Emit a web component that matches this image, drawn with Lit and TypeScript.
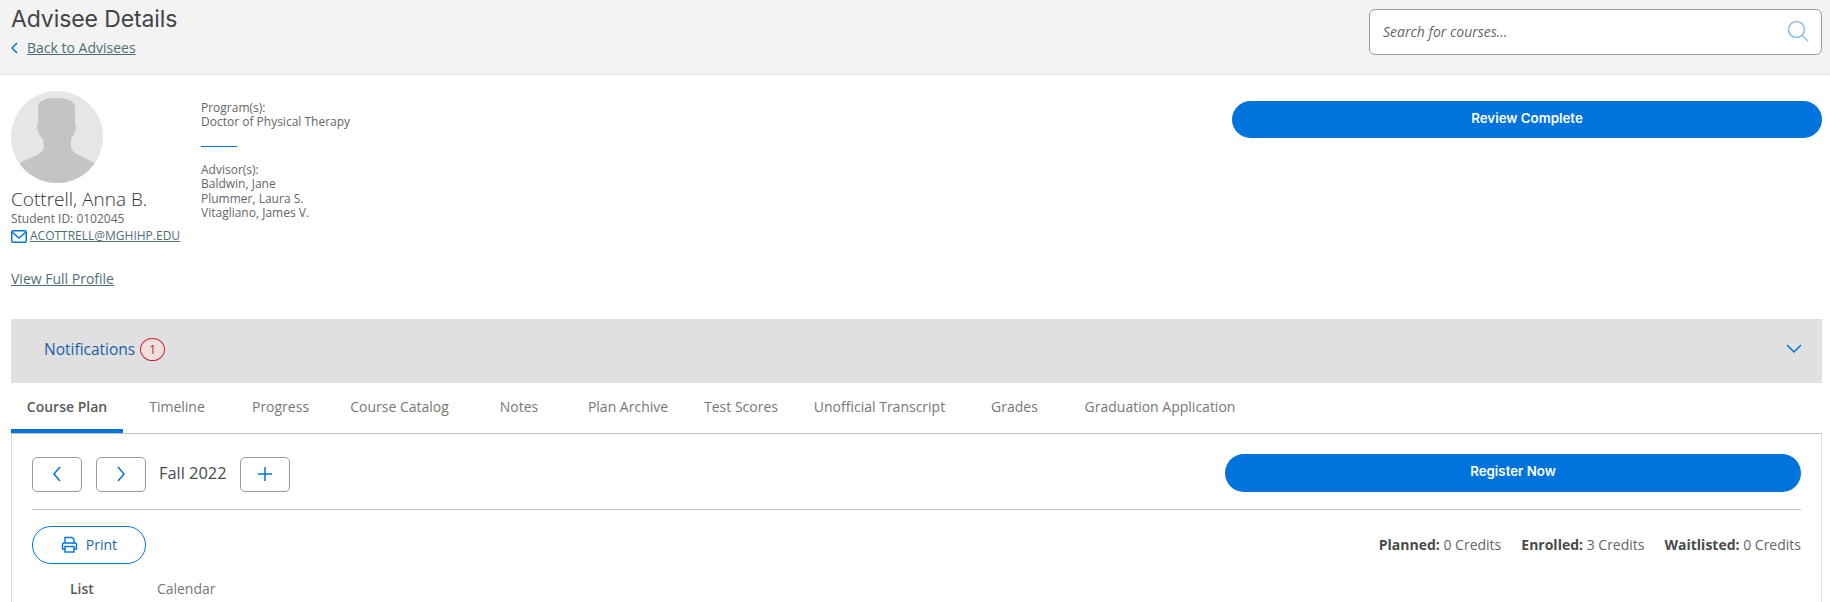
import { LitElement, html, css, svg } from "lit";
import { customElement } from "lit/decorators.js";

const TABS: [string, number][] = [
  ["Course Plan", 112], ["Timeline", 108], ["Progress", 99], ["Course Catalog", 139], ["Notes", 100],
  ["Plan Archive", 118], ["Test Scores", 108], ["Unofficial Transcript", 169], ["Grades", 101], ["Graduation Application", 190],
];

const chevron = (d: string) => svg`<path d=${d} fill="none" stroke="#0073dc" stroke-width="1.5"/>`;

@customElement("app-root")
export class AppRoot extends LitElement {
  static styles = css`
    :host { display: block; width: 1830px; height: 602px; overflow: hidden; background: #fff; font-family: "Open Sans", sans-serif; color: #4a4a4a; }
    a { color: #4f6e74; text-decoration: underline; }
    .header { height: 74px; background: #f3f3f3; border-bottom: 1px solid #e2e2e2; display: flex; justify-content: space-between; padding: 0 8px 0 11px; }
    .title { font: 400 23px/24px Inter, sans-serif; color: #444; margin-top: 7px; letter-spacing: -0.1px; }
    .back { display: flex; align-items: center; gap: 9px; margin-top: 8px; font-size: 14px; line-height: 18px; }
    .back svg { display: block; }
    .search { width: 453px; height: 46px; margin-top: 9px; box-sizing: border-box; border: 1px solid #9a9a9a; border-radius: 6px; background: #fff; display: flex; align-items: center; justify-content: space-between; padding: 0 12px 2px 13px; font-style: italic; font-size: 14px; color: #666; }
    .profile { display: flex; height: 244px; padding: 16px 8px 0 11px; box-sizing: border-box; }
    .who { width: 190px; }
    .avatar { display: block; }
    .name { font-size: 19px; font-weight: 300; line-height: 24px; margin-top: 4px; color: #333; }
    .sid { font-size: 12px; line-height: 16px; margin-top: 0; color: #666; }
    .email { display: flex; align-items: center; gap: 3px; font-size: 12px; line-height: 18px; }
    .full { display: block; margin-top: 25px; font-size: 14px; line-height: 18px; }
    .info { font-size: 12px; line-height: 14.4px; color: #666; padding-top: 10px; width: 400px; }
    .rule { width: 36px; height: 1px; background: #0073dc; margin: 16px 0 16px; }
    .review { margin-left: auto; }
    .pill { background: #0073dc; color: #fff; border-radius: 19px; display: flex; align-items: center; justify-content: center; font: 600 13.3px/1 Inter, sans-serif; box-sizing: border-box; }
    .review.pill { width: 590px; height: 37px; margin-top: 10px; padding-bottom: 1px; }
    .notif { margin: 0 8px 0 11px; height: 64px; box-sizing: border-box; background: #e0e0e0; display: flex; align-items: center; justify-content: space-between; padding: 0 20px 4px 33px; color: #1b5fa8; font-size: 15.5px; }
    .notif-l { display: flex; align-items: center; gap: 5px; }
    .badge { width: 23px; height: 21px; border: 1px solid #c8202f; border-radius: 50%; font-size: 12px; display: flex; align-items: center; justify-content: center; color: #c8202f; background: #f1dfe0; }
    .tabs { margin: 0 8px 0 11px; height: 51px; box-sizing: border-box; border-bottom: 1px solid #c4c4c4; display: flex; }
    .tab { height: 50px; box-sizing: border-box; display: flex; align-items: center; justify-content: center; font-size: 14px; color: #777; white-space: nowrap; padding: 1px 0 4px; }
    .tab.on { color: #5a5a5a; font-weight: 600; border-bottom: 4px solid #0073dc; padding-bottom: 0; }
    .panel { margin: 0 8px 0 11px; height: 170px; box-sizing: border-box; border: 1px solid #dcdcdc; border-width: 0 1px; padding: 20px 20px 0 20px; }
    .bar { display: flex; align-items: center; border-bottom: 1px solid #c4c4c4; padding-bottom: 18px; box-sizing: border-box; height: 56px; }
    .sq { width: 50px; height: 35px; box-sizing: border-box; border: 1px solid #9a9a9a; border-radius: 5px; display: flex; align-items: center; justify-content: center; margin-right: 14px; margin-top: 3px; }
    .term { font-size: 16.4px; color: #4a4a4a; margin: 0 13px 0 -1px; }
    .reg.pill { width: 576px; height: 38px; margin-left: auto; padding-bottom: 2px; }
    .row { display: flex; align-items: center; justify-content: space-between; margin-top: 16px; }
    .print { width: 114px; height: 38px; box-sizing: border-box; border: 1px solid #0073dc; border-radius: 19px; display: flex; align-items: center; justify-content: center; gap: 8px; color: #1566b5; font-size: 14px; padding-bottom: 2px; }
    .credits { display: flex; gap: 20px; font-size: 14px; color: #666; padding-bottom: 2px; }
    .credits b { font-weight: 700; color: #4a4a4a; }
    .views { display: flex; margin-top: 15px; font-size: 14px; color: #777; line-height: 20px; padding-left: 38px; gap: 63px; }
    .views b { font-weight: 600; color: #5a5a5a; }
  `;

  render() {
    return html`
      <div class="header">
        <div>
          <div class="title">Advisee Details</div>
          <div class="back">
            <svg width="7" height="12" viewBox="0 0 7 12">${chevron("M6 1 1 6l5 5")}</svg>
            <a>Back to Advisees</a>
          </div>
        </div>
        <div class="search">
          <span>Search for courses...</span>
          <svg width="22" height="22" viewBox="0 0 22 22" fill="none" stroke="#8fc0ee" stroke-width="1.6"><circle cx="9.500" cy="9.500" r="8"/><path d="m15 15 6 6"/></svg>
        </div>
      </div>
      <div class="profile">
        <div class="who">
          <svg class="avatar" width="92" height="92" viewBox="0 0 92 92">
            <defs><clipPath id="c"><circle cx="46" cy="46" r="46"/></clipPath></defs>
            <circle cx="46" cy="46" r="46" fill="#e6e6e6"/>
            <path clip-path="url(#c)" fill="#c4c4c4" d="M27 16Q28 7 45 7 63 7 64 16L64 32Q66 36 64 41 62 46 60 48L60 57Q62 62 70 65L83 72 83 92 8 92 9 72 24 65Q31 62 33 57L32 48Q29 46 27 41 25 36 27 32Z"/>
          </svg>
          <div class="name">Cottrell, Anna B.</div>
          <div class="sid">Student ID: 0102045</div>
          <div class="email">
            <svg width="16" height="13" viewBox="0 0 16 13" fill="none" stroke="#0073dc" stroke-width="1.5"><rect x=".75" y=".75" width="14.500" height="11.500" rx="1.500"/><path d="m1 2 7 6 7-6"/></svg>
            <a>ACOTTRELL@MGHIHP.EDU</a>
          </div>
          <a class="full">View Full Profile</a>
        </div>
        <div class="info">
          <div>Program(s):</div>
          <div>Doctor of Physical Therapy</div>
          <div class="rule"></div>
          <div>Advisor(s):</div>
          <div>Baldwin, Jane</div>
          <div>Plummer, Laura S.</div>
          <div>Vitagliano, James V.</div>
        </div>
        <div class="review pill">Review Complete</div>
      </div>
      <div class="notif">
        <div class="notif-l"><span>Notifications</span><span class="badge">1</span></div>
        <svg width="16" height="10" viewBox="0 0 16 10">${chevron("M1 1l7 7 7-7")}</svg>
      </div>
      <div class="tabs">
        ${TABS.map(([t, w], i) => html`<div class="tab ${i === 0 ? "on" : ""}" style="width:${w}px">${t}</div>`)}
      </div>
      <div class="panel">
        <div class="bar">
          <div class="sq"><svg width="10" height="16" viewBox="0 0 10 16">${chevron("M8 1 2 8l6 7")}</svg></div>
          <div class="sq"><svg width="10" height="16" viewBox="0 0 10 16">${chevron("M2 1l6 7-6 7")}</svg></div>
          <div class="term">Fall 2022</div>
          <div class="sq"><svg width="16" height="16" viewBox="0 0 16 16">${chevron("M8 1v14M1 8h14")}</svg></div>
          <div class="reg pill">Register Now</div>
        </div>
        <div class="row">
          <div class="print">
            <svg width="17" height="17" viewBox="0 0 17 17" fill="none" stroke="#0073dc" stroke-width="1.4"><path d="M4 7V1.500h7l2 2V7M4 13H1.500V8.500Q1.500 7 3 7h11q1.500 0 1.500 1.500V13H13"/><rect x="4" y="10.500" width="9" height="5.500"/></svg>
            <span>Print</span>
          </div>
          <div class="credits">
            <span><b>Planned:</b> 0 Credits</span>
            <span><b>Enrolled:</b> 3 Credits</span>
            <span><b>Waitlisted:</b> 0 Credits</span>
          </div>
        </div>
        <div class="views"><b>List</b><span>Calendar</span></div>
      </div>
    `;
  }
}
